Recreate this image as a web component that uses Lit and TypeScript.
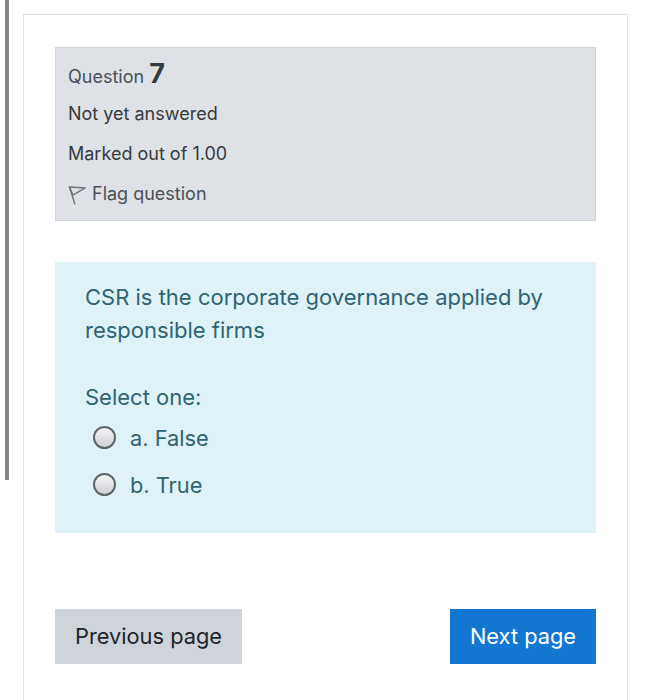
import { LitElement, html, css } from 'lit';
import { customElement } from 'lit/decorators.js';

@customElement('app-root')
export class AppRoot extends LitElement {
  static styles = css`
    :host {
      display: block;
      position: relative;
      height: 700px;
      overflow: hidden;
      background: #fff;
      font-family: Inter, "Liberation Sans", sans-serif;
      color: #373a3c;
    }

    .scrollbar {
      position: absolute;
      left: 5px;
      top: 0;
      width: 4px;
      height: 480px;
      background: #858585;
    }

    .card {
      box-sizing: border-box;
      height: 720px;
      margin: 14px 24px 0 23px;
      padding: 32px 31px 0 31px;
      border: 1.5px solid #e2e2e2;
    }

    .info {
      box-sizing: border-box;
      height: 174px;
      padding: 12px 12px 0 12px;
      background: #dee2e6;
      border: 1px solid #cfd6de;
      font-size: 18px;
      line-height: 27px;
    }

    .info p {
      margin: 0 0 13px 0;
    }

    .info p.qno {
      margin-bottom: 10px;
      color: #495057;
    }

    .qno b {
      font-size: 27px;
      font-weight: 700;
      color: #343a40;
    }

    .flag {
      display: flex;
      align-items: center;
      gap: 6px;
      color: #495057;
    }

    .content {
      box-sizing: border-box;
      height: 271px;
      margin-top: 41px;
      padding: 19px 30px 0 30px;
      background: #def2f8;
      color: #2f6473;
      font-size: 21.8px;
    }

    .prompt {
      margin: 0 0 34px 0;
      line-height: 33px;
      font-size: 22px;
    }

    .select {
      margin: 0;
      line-height: 33px;
      font-size: 22px;
    }

    .option {
      display: flex;
      align-items: center;
      gap: 14px;
      height: 47px;
      padding-left: 8px;
    }

    .radio {
      box-sizing: border-box;
      width: 23px;
      height: 23px;
      border-radius: 50%;
      border: 2px solid #5f6468;
      background: linear-gradient(180deg, #f4f4f6 0%, #cfd1d6 100%);
    }

    .nav {
      display: flex;
      justify-content: space-between;
      margin-top: 76px;
    }

    .btn {
      box-sizing: border-box;
      display: flex;
      align-items: center;
      justify-content: center;
      height: 55px;
      padding-bottom: 2px;
      font-size: 21.8px;
    }

    .prev {
      width: 187px;
      background: #ced4da;
      color: #212529;
    }

    .next {
      width: 146px;
      background: #1177d1;
      color: #fff;
    }
  `;

  render() {
    return html`
      <div class="scrollbar"></div>
      <div class="card">
        <div class="info">
          <p class="qno">Question <b>7</b></p>
          <p>Not yet answered</p>
          <p>Marked out of 1.00</p>
          <div class="flag">
            <svg width="18" height="22" viewBox="0 0 18 22" fill="none" stroke="#6f7478" stroke-width="1.4">
              <path d="M1.5 4 L17 5 L5 12 Z" />
              <path d="M1.5 4 L7 21.5" />
            </svg>
            <span>Flag question</span>
          </div>
        </div>
        <div class="content">
          <p class="prompt">CSR is the corporate governance applied by responsible firms</p>
          <p class="select">Select one:</p>
          <div class="option"><span class="radio"></span><span>a. False</span></div>
          <div class="option"><span class="radio"></span><span>b. True</span></div>
        </div>
        <div class="nav">
          <div class="btn prev">Previous page</div>
          <div class="btn next">Next page</div>
        </div>
      </div>
    `;
  }
}
